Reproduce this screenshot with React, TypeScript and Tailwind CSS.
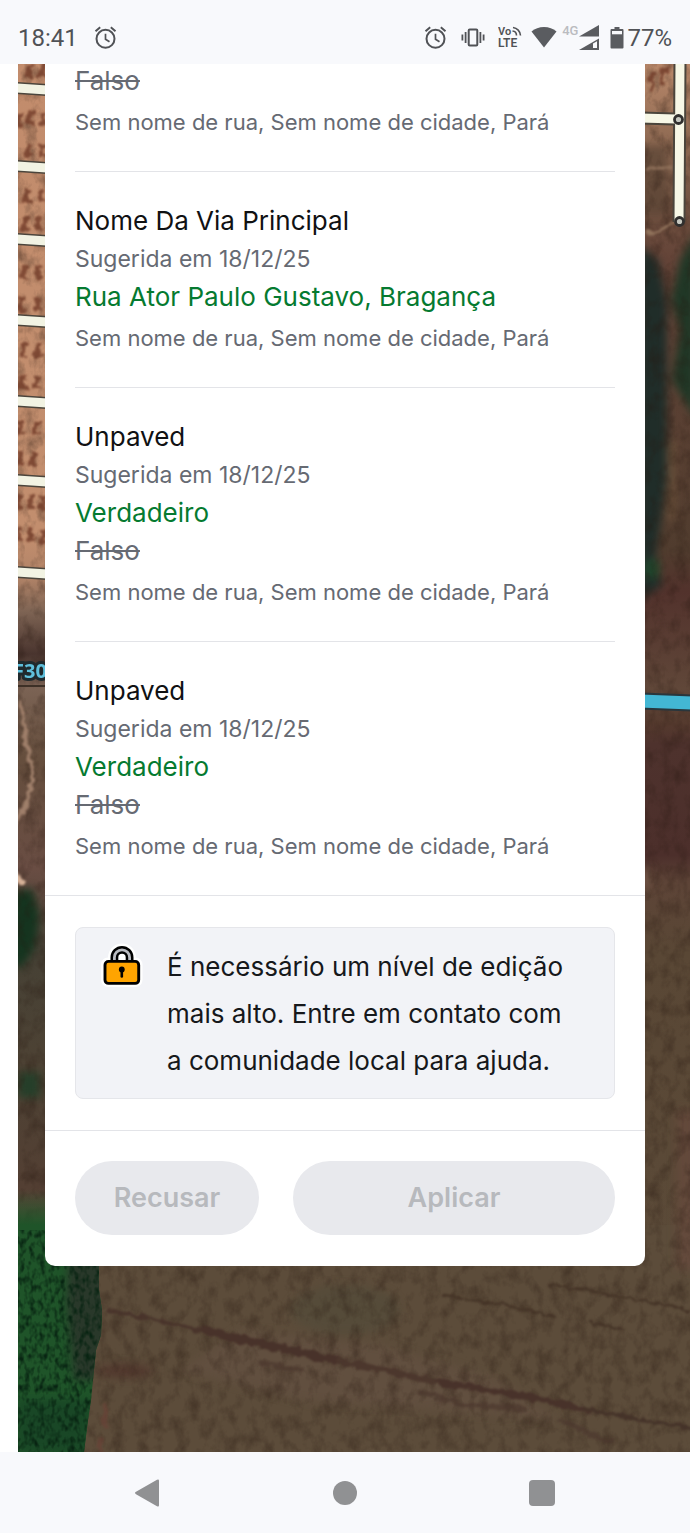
import React from "react";

type Suggestion = {
  id: number;
  title?: string;
  date?: string;
  added?: string;
  removed?: string;
  place: string;
};

const PLACE = "Sem nome de rua, Sem nome de cidade, Pará";

const suggestions: Suggestion[] = [
  { id: 1, removed: "Falso", place: PLACE },
  {
    id: 2,
    title: "Nome Da Via Principal",
    date: "18/12/25",
    added: "Rua Ator Paulo Gustavo, Bragança",
    place: PLACE,
  },
  { id: 3, title: "Unpaved", date: "18/12/25", added: "Verdadeiro", removed: "Falso", place: PLACE },
  { id: 4, title: "Unpaved", date: "18/12/25", added: "Verdadeiro", removed: "Falso", place: PLACE },
];

function AlarmIcon() {
  return (
    <svg className="h-6 w-6" viewBox="0 0 24 24" fill="none" stroke="#505256" strokeWidth="2" aria-hidden="true">
      <circle cx="11.500" cy="12.800" r="9" />
      <path d="M1.500 5.200 6.200 1.300M21.500 5.200 16.800 1.300" />
      <path d="M11.500 7.800v5.400l4 2.600" strokeWidth="1.700" />
    </svg>
  );
}

function StatusBar() {
  return (
    <header className="z-10 flex h-16 shrink-0 items-center justify-between bg-[#f8f9fc] px-[18px] pt-3 font-[Roboto,sans-serif] text-2xl text-[#505256]">
      <div className="flex items-center gap-4">
        <span>18:41</span>
        <AlarmIcon />
      </div>
      <div className="flex items-center">
        <AlarmIcon />
        <svg className="ml-[13px] h-6 w-6" viewBox="0 0 24 24" fill="none" stroke="#505256" strokeWidth="2" aria-hidden="true">
          <rect x="7.700" y="3.500" width="8.600" height="16" rx="1" />
          <path d="M4.600 6v11M1.400 8.500v6M19.400 6v11M22.600 8.500v6" strokeWidth="1.800" />
        </svg>
        <svg className="ml-[13px] h-6 w-6" viewBox="0 0 24 24" fill="none" stroke="#505256" aria-hidden="true">
          <text x="0" y="9" fill="#505256" stroke="none" fontFamily="Roboto, sans-serif" fontWeight="600" fontSize="11">Vo</text>
          <text x="0" y="20.500" fill="#505256" stroke="none" fontFamily="Roboto, sans-serif" fontWeight="600" fontSize="12">LTE</text>
          <path d="M14.500 5a4.500 4.500 0 0 1 4 4.500M15 1.500a8.500 8.500 0 0 1 7.500 8" strokeWidth="1.600" />
        </svg>
        <svg className="ml-[9px] h-6 w-[26px]" viewBox="0 0 26 24" fill="#5a5c60" aria-hidden="true">
          <path d="M13 21.500.5 5.500C4 2.500 8 1 13 1s9 1.500 12.500 4.500Z" />
        </svg>
        <span className="ml-[5px] self-start text-[13px] leading-[18px] font-medium text-[#bbbcc0]">4G</span>
        <svg className="ml-px h-[26px] w-5" viewBox="0 0 20 26" fill="#5a5c60" aria-hidden="true">
          <path d="M20 0v11.500H0Z" />
          <path d="M20 13.500V25H0Z" />
          <path d="M14 18.500l4-2.200V23h-4Z" fill="#f8f9fc" />
        </svg>
        <svg className="ml-[11px] h-6 w-[14px]" viewBox="0 0 14 24" aria-hidden="true">
          <path d="M4.500 1h5v2H12.500a1 1 0 0 1 1 1V21.500a1 1 0 0 1-1 1H1.500a1 1 0 0 1-1-1V4a1 1 0 0 1 1-1H4.500Z" fill="#5a5c60" />
          <path d="M2 5h10V8.300H2Z" fill="#f8f9fc" />
        </svg>
        <span className="ml-[3px]">77%</span>
      </div>
    </header>
  );
}

const streets = [89, 167, 240, 321, 402, 481, 573];
const houses: [number, number][] = [
  [30, 71], [44, 70], [19, 119], [31, 118], [44, 119], [29, 150], [43, 150],
  [28, 196], [42, 196], [26, 224], [39, 223], [25, 272], [39, 272], [22, 304], [38, 304],
  [24, 350], [39, 350], [23, 382], [37, 383], [21, 427], [37, 427], [21, 458], [34, 459],
  [19, 502], [32, 502], [44, 502], [20, 535], [31, 534], [44, 536],
];

function SatelliteMap() {
  return (
    <svg
      className="absolute inset-0 h-full w-full"
      viewBox="18 64 672 1388"
      preserveAspectRatio="xMidYMid slice"
      aria-hidden="true"
    >
      <defs>
        <linearGradient id="west" x1="0" y1="64" x2="0" y2="1452" gradientUnits="userSpaceOnUse">
          <stop offset="0" stopColor="#c28c6c" />
          <stop offset=".34" stopColor="#c28e6e" />
          <stop offset=".37" stopColor="#b18367" />
          <stop offset=".395" stopColor="#7d6353" />
          <stop offset=".425" stopColor="#49342e" />
          <stop offset=".45" stopColor="#7b6354" />
          <stop offset=".5" stopColor="#654e3d" />
          <stop offset=".58" stopColor="#694d43" />
          <stop offset=".64" stopColor="#464135" />
          <stop offset=".72" stopColor="#4d4234" />
          <stop offset=".81" stopColor="#533f33" />
          <stop offset=".83" stopColor="#5b4c3b" />
        </linearGradient>
        <linearGradient id="east" x1="0" y1="64" x2="0" y2="1452" gradientUnits="userSpaceOnUse">
          <stop offset="0" stopColor="#b9886a" />
          <stop offset=".05" stopColor="#936d55" />
          <stop offset=".1" stopColor="#715241" />
          <stop offset=".14" stopColor="#644438" />
          <stop offset=".35" stopColor="#503c2e" />
          <stop offset=".38" stopColor="#52322c" />
          <stop offset=".45" stopColor="#604739" />
          <stop offset=".475" stopColor="#553a2e" />
          <stop offset=".49" stopColor="#4e322d" />
          <stop offset=".57" stopColor="#4c2f2b" />
          <stop offset=".59" stopColor="#5d4437" />
          <stop offset=".64" stopColor="#594735" />
          <stop offset="1" stopColor="#5c4c3a" />
        </linearGradient>
        <linearGradient id="meadow" x1="0" y1="1190" x2="0" y2="1225" gradientUnits="userSpaceOnUse">
          <stop offset="0" stopColor="#1f5429" stopOpacity="0" />
          <stop offset="1" stopColor="#1f5429" />
        </linearGradient>
        <filter id="grain" x="0" y="0" width="1" height="1" colorInterpolationFilters="sRGB">
          <feTurbulence type="fractalNoise" baseFrequency=".08 .06" numOctaves="4" seed="4" />
          <feColorMatrix values="0 0 0 0 .15  0 0 0 0 .09  0 0 0 0 .06  .8 0 0 0 -.34" />
        </filter>
        <filter id="leaf" x="0" y="0" width="1" height="1" colorInterpolationFilters="sRGB">
          <feTurbulence type="fractalNoise" baseFrequency=".2 .13" numOctaves="2" seed="9" />
          <feColorMatrix values="0 0 0 0 .03  0 0 0 0 .14  0 0 0 0 .07  0 2.400 0 0 -1" />
          <feComposite in2="SourceAlpha" operator="in" />
        </filter>
        <filter id="rough" x="-.2" y="-.5" width="1.400" height="2" colorInterpolationFilters="sRGB">
          <feTurbulence type="fractalNoise" baseFrequency=".12" numOctaves="2" />
          <feDisplacementMap in="SourceGraphic" scale="8" xChannelSelector="R" yChannelSelector="G" />
          <feGaussianBlur stdDeviation="1.300" />
        </filter>
        <filter id="soft" x="-.5" y="-.5" width="2" height="2" colorInterpolationFilters="sRGB">
          <feGaussianBlur stdDeviation="4" />
        </filter>
        <clipPath id="field">
          <path d="M18 1185H98L99 1290 102 1310 101 1335 96 1350 91 1400 88 1420 84 1452H18Z" />
        </clipPath>
      </defs>

      <rect x="18" y="64" width="327" height="1388" fill="url(#west)" />
      <rect x="345" y="64" width="345" height="1388" fill="url(#east)" />
      <rect x="18" y="1225" width="672" height="227" fill="#5c4c3a" />

      <g filter="url(#soft)">
        <path d="M640 245 658 260 667 300V480L655 560 662 585 640 600Z" fill="#202d29" />
        <path d="M696 230 680 260 671 300 680 330 672 380 696 420Z" fill="#203726" />
        <path d="M640 145H668V215H640Z" fill="#5a4535" opacity=".7" />
        <path d="M645 560h14v18h-14z" fill="#1f4a2e" />
        <path d="M668 440h7v80h-7z" fill="#6d533c" />
        <path d="M12 892 32 888 40 915 36 945 22 968 12 964Z" fill="#15341f" />
        <path d="M18 1072H40V1098H18Z" fill="#253e29" />
        <path d="M640 870h12v18h-12z" fill="#6c5042" />
        <path d="M676 1110h20v160h-20z" fill="#694a3d" opacity=".6" />
        <path d="M240 1330 380 1345 500 1380 560 1420 300 1400 180 1370Z" fill="#665144" opacity=".5" />
        <ellipse cx="345" cy="1310" rx="55" ry="25" fill="#544b39" opacity=".8" />
        <ellipse cx="125" cy="1371" rx="28" ry="7" fill="#4f332b" opacity=".8" />
      </g>

      <rect x="18" y="64" width="672" height="1388" filter="url(#grain)" />

      <g filter="url(#rough)" fill="#713b28" opacity=".8">
        {houses.map(([x, y], i) => (
          <path key={i} d={`M${x - 3} ${y - 7}h6v4h-2v7h3v3h-9v-6h2z`} />
        ))}
        <path d="M650 72h7v4h-4v18h-3zM661 68h7v4h-4v14h-3z" />
      </g>

      <g filter="url(#rough)" fill="none" strokeLinecap="round">
        <path d="M20 702C24 720 25 745 30 760S32 800 16 823" stroke="#9f7f6a" strokeWidth="4" />
        <path d="M648 168H672M645 233 660 231 674 222" stroke="#8f715a" strokeWidth="3" />
        <path d="M16 877 22 881" stroke="#d6b298" strokeWidth="9" />
        <path d="M108 1310 160 1321 215 1334" stroke="#49342b" strokeWidth="4" />
        <path d="M205 1331 275 1347 345 1362" stroke="#48322a" strokeWidth="8" />
        <path d="M340 1361 420 1378 475 1388" stroke="#4c372d" strokeWidth="6" />
        <path d="M440 1382 530 1397 590 1411" stroke="#48322a" strokeWidth="7" />
        <path d="M585 1409 690 1428" stroke="#453329" strokeWidth="4" />
        <path d="M260 1362 300 1371M420 1392 460 1404 525 1409M560 1420 610 1442" stroke="#4c382d" strokeWidth="5" opacity=".7" />
        <path d="M443 1296 500 1304 555 1317M550 1285 590 1291 640 1300 690 1310M590 1322 625 1330" stroke="#453427" strokeWidth="2.500" />
        <path d="M105 1405V1425M101 1440V1452" stroke="#6b4036" strokeWidth="5" opacity=".6" />
      </g>

      <g clipPath="url(#field)">
        <rect x="18" y="1185" width="90" height="267" fill="url(#meadow)" />
        <path d="M70 1235H110V1340L98 1380H74L66 1300Z" fill="#29382a" filter="url(#soft)" />
        <path d="M18 1400H90V1452H18Z" fill="#194726" filter="url(#soft)" />
        <rect x="18" y="1230" width="90" height="222" filter="url(#leaf)" />
      </g>

      {streets.map((y) => (
        <g key={y}>
          <path d={`M17 ${y - 1}L47 ${y + 1}`} stroke="#4b453c" strokeWidth="12" />
          <path d={`M17 ${y - 1}L47 ${y + 1}`} stroke="#f2f3e3" strokeWidth="9" />
        </g>
      ))}
      <g fill="none" strokeLinecap="butt">
        <path d="M640 118 674 119M680 60 679 222" stroke="#4b453c" strokeWidth="13" />
        <path d="M640 118 676 119M680 60 679 222" stroke="#f7f7e6" strokeWidth="9" />
        <circle cx="678.500" cy="119.500" r="4" fill="#c6c8c0" stroke="#302f2e" strokeWidth="2.800" />
        <circle cx="679.500" cy="221.500" r="4" fill="#c6c8c0" stroke="#302f2e" strokeWidth="2.800" />
        <path d="M640 701 692 703" stroke="#29363c" strokeWidth="17" />
        <path d="M640 701 692 703" stroke="#43b7d4" strokeWidth="13" />
        <path d="M18 686H46" stroke="#3d3026" strokeWidth="2" />
      </g>
      <text
        x="13"
        y="678"
        fill="#5fbfdb"
        stroke="#202a2d"
        strokeWidth="6"
        strokeLinejoin="round"
        paintOrder="stroke"
        fontFamily="Open Sans, sans-serif"
        fontWeight="700"
        fontSize="20"
      >
        F30
      </text>
    </svg>
  );
}

function LockIcon() {
  return (
    <svg className="h-[46px] w-[46px] shrink-0" viewBox="0 0 46 46" aria-hidden="true">
      <g fill="#fff" stroke="#fff" strokeWidth="5" strokeLinejoin="round">
        <path d="M11.600 19v-4.600a11.400 11.400 0 0 1 22.800 0V19Z" />
        <rect x="4.500" y="17" width="36.500" height="24.500" rx="4.500" />
      </g>
      <path d="M15.400 20v-5.600a7.600 7.600 0 0 1 15.200 0V20" fill="none" stroke="#000" strokeWidth="7.800" />
      <path d="M15.400 20v-5.600a7.600 7.600 0 0 1 15.200 0V20" fill="none" stroke="#b9bbc1" strokeWidth="2.800" />
      <rect x="6" y="18.400" width="33.700" height="22" rx="3.500" fill="#ffa400" stroke="#000" strokeWidth="2.900" />
      <circle cx="22.800" cy="26.500" r="2.900" />
      <path d="M22.800 27v6.500" stroke="#000" strokeWidth="2.600" strokeLinecap="round" />
    </svg>
  );
}

function SuggestionItem({ item }: { item: Suggestion }) {
  return (
    <li className="border-t border-[#e3e4e8] pt-[30px] pb-[30px] text-[26px] leading-[38px] first:border-t-0 first:pt-0">
      {item.title && <h2 className="text-[#101113]">{item.title}</h2>}
      {item.date && <p className="text-[23px] text-[#666a73]">Sugerida em {item.date}</p>}
      {item.added && <p className="text-[#057a30]">{item.added}</p>}
      {item.removed && (
        <p className="text-[#666a73]">
          <del>{item.removed}</del>
        </p>
      )}
      <p className="mt-[3px] text-[22px] text-[#666a73]">{item.place}</p>
    </li>
  );
}

function NavigationBar() {
  return (
    <nav className="flex h-[81px] shrink-0 items-center justify-between bg-[#f8f9fc] px-[135px]">
      <button type="button" aria-label="Voltar">
        <svg className="block h-7 w-[26px]" viewBox="0 0 26 28" fill="#909193">
          <path d="M1 12.800 22 .8q2-1 2 1v24.400q0 2-2 1L1 15.200q-2-1.200 0-2.400Z" />
        </svg>
      </button>
      <button type="button" aria-label="Início">
        <span className="block h-6 w-6 rounded-full bg-[#909193]" />
      </button>
      <button type="button" aria-label="Recentes">
        <span className="block h-[26px] w-[26px] rounded-sm bg-[#909193]" />
      </button>
    </nav>
  );
}

export default function App() {
  return (
    <div className="flex h-screen flex-col bg-white font-[Inter,sans-serif]">
      <StatusBar />
      <main className="relative ml-[18px] flex min-h-0 flex-1 flex-col justify-end overflow-hidden pr-[45px] pb-[186px] pl-[27px]">
        <SatelliteMap />
        <section className="relative rounded-b-[10px] bg-white">
          <ul className="px-[30px]">
            {suggestions.map((item) => (
              <SuggestionItem key={item.id} item={item} />
            ))}
          </ul>
          <div className="border-t border-[#e3e4e8] px-[30px] pt-[31px] pb-[31px]">
            <div className="flex gap-[18px] rounded-lg border border-[#e5e6ea] bg-[#f2f3f7] pt-[15px] pr-9 pb-[14px] pl-[23px]">
              <LockIcon />
              <p className="pl-1 text-[26px] leading-[47px] text-[#16181b]">
                É necessário um nível de edição mais alto. Entre em contato com a comunidade local para ajuda.
              </p>
            </div>
          </div>
          <div className="grid grid-cols-[184px_1fr] gap-[34px] border-t border-[#e3e4e8] px-[30px] pt-[30px] pb-[31px]">
            <button type="button" disabled className="h-[74px] rounded-full bg-[#e8e9ed] text-[27px] font-semibold text-[#b7b9bd]">
              Recusar
            </button>
            <button type="button" disabled className="h-[74px] rounded-full bg-[#e8e9ed] text-[27px] font-semibold text-[#b7b9bd]">
              Aplicar
            </button>
          </div>
        </section>
      </main>
      <NavigationBar />
    </div>
  );
}
